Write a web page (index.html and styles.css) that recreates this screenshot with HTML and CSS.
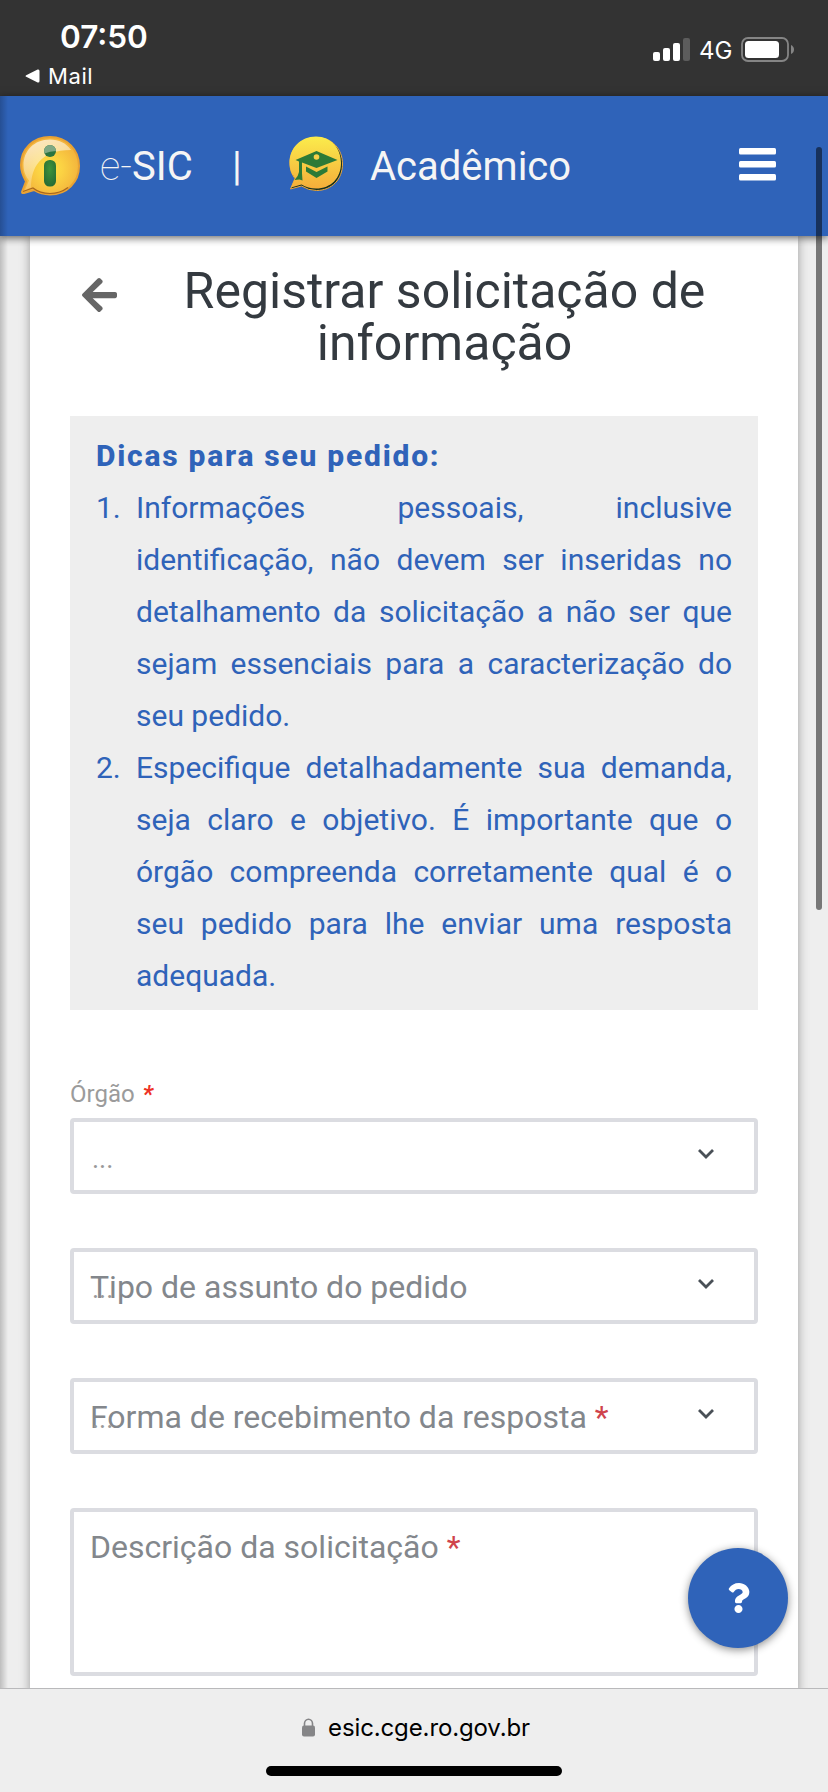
FILE: index.html
```html
<!DOCTYPE html>
<html lang="pt-BR">
<head>
<meta charset="utf-8">
<title>e-SIC | Registrar solicitação de informação</title>
<link rel="stylesheet" href="styles.css">
</head>
<body>
<div class="screen">
  <div class="status">
    <div class="status-left">
      <div class="clock">07:50</div>
      <div class="back-app">
        <svg width="15" height="14" viewBox="0 0 15 14"><path d="M1.2 6.2 12.6.5Q14.5 0 14.5 2v10q0 2-1.900 1.500L1.200 7.800Q-.200 7 1.200 6.200z" fill="#fff"/></svg>
        <span>Mail</span>
      </div>
    </div>
    <div class="status-right">
      <svg width="37" height="23" viewBox="0 0 37 23"><g fill="#fff"><rect y="14" width="7" height="9" rx="2"/><rect x="10" y="10" width="7" height="13" rx="2"/><rect x="20" y="5" width="7" height="18" rx="2"/><rect x="30" width="7" height="23" rx="2" fill="#5c5c5c"/></g></svg>
      <span class="network">4G</span>
      <svg class="battery" width="54" height="25" viewBox="0 0 54 25"><rect x="1" y="1" width="46" height="23" rx="6" fill="none" stroke="#858585" stroke-width="1.800"/><rect x="4" y="4" width="34" height="17" rx="3.500" fill="#fff"/><path d="M50 8q3 1.500 3 4.500t-3 4.500z" fill="#858585"/></svg>
    </div>
  </div>

  <header class="header">
    <svg class="logo-info" width="60" height="60" viewBox="0 0 60 60">
      <defs>
        <radialGradient id="ball" cx=".5" cy=".55" r=".5"><stop offset="0" stop-color="#fde545"/><stop offset=".45" stop-color="#fbd143"/><stop offset="1" stop-color="#f3b53d"/></radialGradient>
        <linearGradient id="gloss" x1=".2" y1="0" x2=".5" y2="1"><stop offset="0" stop-color="#fff" stop-opacity=".7"/><stop offset="1" stop-color="#fff" stop-opacity=".12"/></linearGradient>
        <radialGradient id="stem" cx=".5" cy=".35" r=".7"><stop offset="0" stop-color="#3d933b"/><stop offset="1" stop-color="#266a35"/></radialGradient>
      </defs>
      <path d="M30 1C13 1 1 13 1 29c0 7 2.500 12 5 16.500L2 56q0 1.500 2 1l10-3q7 4.500 16 4.500C47 58.500 59 46 59 30S47 1 30 1z" fill="url(#ball)" stroke="#e9a233" stroke-width="2"/>
      <path d="M3 55.500 13 52q7 5.500 17 5.500 10 0 18-6" fill="none" stroke="#a8661c" stroke-width="1.200"/>
      <path d="M30 3.500C14 3.500 3.500 15 3.500 29c0 7 2.500 11.500 5.500 15.500L5 54l6-2.500C11 32 20 14 51 14 46 7 39 3.500 30 3.500z" fill="url(#gloss)"/>
      <circle cx="30" cy="15" r="6" fill="#2b7440"/>
      <path d="M24 15a6 6 0 0 1 12 0q-6 0-11.500 2.500z" fill="#7fa884"/>
      <rect x="24" y="24" width="12" height="26.500" rx="5.500" fill="url(#stem)"/>
    </svg>
    <span class="brand"><span class="brand-thin">e-</span>SIC</span>
    <span class="divider">|</span>
    <svg class="logo-academic" width="55" height="56" viewBox="0 0 55 56">
      <defs><linearGradient id="cap-bg" x1="0" y1="0" x2="0" y2="1"><stop offset="0" stop-color="#fbec4c"/><stop offset="1" stop-color="#f5ae3a"/></linearGradient></defs>
      <path d="M27.500 1.500C12 1.500 1 12 1 27.500 1 34 3 39 6 42.500L1.500 53l11-3q7 4.500 15 4.500C43 54.500 53.500 43 53.500 28S43 1.500 27.500 1.500z" fill="#16301f" stroke="#eda83b" stroke-width="1"/>
      <path d="M27 .5C11.500.5.500 12 .500 27c0 6.500 2.500 11.500 5.500 15L2 51.500l10.500-3Q19 52.500 27 52.500C42 52.500 52 42 52 27S42 .5 27 .5z" fill="url(#cap-bg)"/>
      <path d="M27.500 15 48.500 24 27.500 32 13 26.500v11l.500 7-3-1-5 .5q4-4 4.500-8V25.500L6.500 24z" fill="#2d7a37"/>
      <path d="M17 30.500l10.500 5.500 11-5.500v5L27.500 42 17 35.500z" fill="#2d7a37"/>
      <circle cx="27.500" cy="21" r="2.800" fill="#f8cf48"/>
    </svg>
    <span class="section">Acadêmico</span>
    <svg class="menu" width="37" height="33" viewBox="0 0 37 33"><g fill="#fff"><rect width="37" height="6.500" rx="1.500"/><rect y="13" width="37" height="6.500" rx="1.500"/><rect y="26" width="37" height="6.500" rx="1.500"/></g></svg>
  </header>

  <main class="page">
    <section class="card">
      <div class="title-row">
        <svg class="back" width="35" height="40" viewBox="0 0 448 512"><path fill="#666" d="M257.500 445.100l-22.200 22.200c-9.400 9.400-24.600 9.400-33.900 0L7 273c-9.400-9.400-9.400-24.600 0-33.900L201.400 44.700c9.400-9.400 24.600-9.400 33.900 0l22.200 22.200c9.500 9.500 9.300 25-.4 34.300L136.600 216H424c13.300 0 24 10.700 24 24v32c0 13.300-10.700 24-24 24H136.600l120.500 114.800c9.800 9.300 10 24.800.4 34.300z"/></svg>
        <h1 class="title">Registrar solicitação de informação</h1>
      </div>
      <div class="tips">
        <strong class="tips-title">Dicas para seu pedido:</strong>
        <ol class="tips-list">
          <li><span class="num">1.</span><p>Informações pessoais, inclusive identificação, não devem ser inseridas no detalhamento da solicitação a não ser que sejam essenciais para a caracterização do seu pedido.</p></li>
          <li><span class="num">2.</span><p>Especifique detalhadamente sua demanda, seja claro e objetivo. É importante que o órgão compreenda corretamente qual é o seu pedido para lhe enviar uma resposta adequada.</p></li>
        </ol>
      </div>
      <div class="form">
        <div class="label">Órgão <em>*</em></div>
        <div class="field"><span class="dots">...</span><svg class="chevron" width="18" height="12" viewBox="0 0 18 12"><path d="M2 2l7 7 7-7" fill="none" stroke="#495057" stroke-width="2.800"/></svg></div>
        <div class="field"><span class="dots">...</span><span class="placeholder">Tipo de assunto do pedido</span><svg class="chevron" width="18" height="12" viewBox="0 0 18 12"><path d="M2 2l7 7 7-7" fill="none" stroke="#495057" stroke-width="2.800"/></svg></div>
        <div class="field"><span class="dots">...</span><span class="placeholder">Forma de recebimento da resposta <b>*</b></span><svg class="chevron" width="18" height="12" viewBox="0 0 18 12"><path d="M2 2l7 7 7-7" fill="none" stroke="#495057" stroke-width="2.800"/></svg></div>
        <div class="field area"><span class="placeholder">Descrição da solicitação <b>*</b></span></div>
      </div>
    </section>
  </main>

  <footer class="browser-bar">
    <div class="address">
      <svg width="13" height="19" viewBox="0 0 13 19"><rect y="7.500" width="13" height="11" rx="2" fill="#858587"/><path d="M2.500 8.500V5.500a4 4.300 0 0 1 8 0v3" fill="none" stroke="#858587" stroke-width="1.600"/></svg>
      <span>esic.cge.ro.gov.br</span>
    </div>
    <div class="home"></div>
  </footer>

  <div class="drawer-shadow"></div>
  <div class="scrollbar"></div>
  <div class="help"><svg width="23" height="30" viewBox="0 0 384 512"><path fill="#fff" d="M202.021 0C122.202 0 70.503 32.703 29.914 91.026c-7.363 10.580-5.093 25.086 5.178 32.874l43.138 32.709c10.373 7.865 25.132 6.026 33.253-4.148 25.049-31.381 43.630-49.449 82.757-49.449 30.764 0 68.816 19.799 68.816 49.631 0 22.552-18.617 34.134-48.993 51.164-35.423 19.860-82.299 44.576-82.299 106.405V320c0 13.255 10.745 24 24 24h72.471c13.255 0 24-10.745 24-24v-5.773c0-42.860 125.268-44.645 125.268-160.627C377.504 66.256 286.902 0 202.021 0zM192 373.459c-38.196 0-69.271 31.075-69.271 69.271 0 38.195 31.075 69.270 69.271 69.270s69.271-31.075 69.271-69.271-31.075-69.270-69.271-69.270z"/></svg></div>
</div>
</body>
</html>
```
FILE: styles.css
```css
* { box-sizing: border-box; }
body { margin: 0; font-family: Roboto, "Liberation Sans", sans-serif; }
svg { display: block; flex: none; }

.screen {
  position: relative;
  display: flex;
  flex-direction: column;
  width: 828px;
  height: 1792px;
  overflow: hidden;
  background: #eee;
}

.status {
  display: flex;
  justify-content: space-between;
  flex: none;
  height: 96px;
  background: #333;
  color: #fff;
  font-family: Inter, "Liberation Sans", sans-serif;
}
.status-left { padding: 17px 0 0 25px; }
.clock {
  padding-left: 35px;
  font-size: 31.5px;
  font-weight: 600;
  line-height: 39px;
}
.back-app {
  display: flex;
  align-items: center;
  gap: 8px;
  height: 40px;
  font-size: 22px;
  font-weight: 400;
  letter-spacing: .6px;
}
.status-right {
  display: flex;
  align-items: flex-start;
  padding: 38px 33px 0 0;
}
.network {
  width: 51px;
  padding-left: 9px;
  font-size: 24px;
  font-weight: 400;
  line-height: 26px;
}
.battery { margin-top: -1px; }

.header {
  position: relative;
  z-index: 2;
  display: flex;
  align-items: flex-start;
  flex: none;
  height: 140px;
  padding: 40px 52px 0 20px;
  background: #2f63b9;
  box-shadow: 0 2px 8px rgba(0, 0, 0, .6);
  color: #f5f5f5;
  font-size: 40px;
  line-height: 62px;
}
.brand { width: 132px; margin-left: 20px; white-space: nowrap; }
.brand-thin { font-weight: 100; }
.divider { width: 57px; font-weight: 400; }
.section { margin-left: 26px; }
.menu { margin: 12px 0 0 auto; }

.page { flex: 1; min-height: 0; padding: 0 30px; overflow: hidden; }
.card {
  height: 1460px;
  padding: 29px 40px 0;
  background: #fff;
  box-shadow: 0 0 10px rgba(0, 0, 0, .35);
}
.title-row { display: flex; height: 151px; }
.back { margin: 10px 14px 0 12px; }
.title {
  flex: 1;
  margin: 0;
  color: #343a40;
  font-size: 50px;
  font-weight: 400;
  line-height: 52px;
  text-align: center;
}

.tips {
  height: 594px;
  padding: 14px 26px 0;
  background: #eee;
  color: #2f63b9;
  font-size: 30px;
  line-height: 52px;
}
.tips-title { display: block; letter-spacing: 1.75px; font-size: 30px; font-weight: 800; }
.tips-list { margin: 0; padding: 0; list-style: none; }
.tips-list li { display: flex; }
.tips-list p { flex: 1; margin: 0; text-align: justify; }
.num { width: 40px; }

.form { display: flex; flex-direction: column; gap: 54px; padding-top: 68px; }
.label {
  height: 40px;
  margin-bottom: -54px;
  color: #9b9b9b;
  font-size: 24px;
  line-height: 32px;
}
.label em { margin-left: 2px; color: #ee3124; font-weight: 700; }
.field {
  position: relative;
  display: flex;
  justify-content: space-between;
  height: 76px;
  padding: 11px 39px 0 16px;
  border: 4px solid #dbdce1;
  border-radius: 4px;
}
.area { height: 168px; }
.placeholder { color: #83878c; font-size: 32px; line-height: 48px; }
.placeholder b { color: #cf434c; font-weight: 400; }
.dots {
  position: absolute;
  left: 18px;
  top: 18px;
  color: #999;
  font-size: 27px;
  line-height: 38px;
}
.chevron { margin: 15px 0 0 auto; }

.browser-bar {
  position: relative;
  z-index: 3;
  display: flex;
  flex-direction: column;
  align-items: center;
  flex: none;
  height: 104px;
  border-top: 1px solid #b9b9bb;
  background: #eee;
}
.address {
  display: flex;
  align-items: center;
  gap: 13px;
  height: 77px;
  padding-left: 4px;
  color: #000;
  font-family: Inter, "Liberation Sans", sans-serif;
  font-size: 24px;
  letter-spacing: -.12px;
}
.home { width: 296px; height: 10px; border-radius: 5px; background: #000; }

.drawer-shadow {
  position: absolute;
  z-index: 2;
  left: 0;
  top: 96px;
  width: 8px;
  height: 1592px;
  background: linear-gradient(to right, rgba(0, 0, 0, .2), rgba(0, 0, 0, .1) 50%, transparent);
}
.scrollbar {
  position: absolute;
  z-index: 4;
  left: 816px;
  top: 147px;
  width: 6px;
  height: 763px;
  border-radius: 3px;
  background: rgba(0, 0, 0, .5);
}
.help {
  position: absolute;
  z-index: 2;
  left: 688px;
  top: 1548px;
  display: flex;
  align-items: center;
  justify-content: center;
  width: 100px;
  height: 100px;
  border-radius: 50%;
  background: #2f63b9;
  box-shadow: 0 2px 8px rgba(0, 0, 0, .45);
}
```
